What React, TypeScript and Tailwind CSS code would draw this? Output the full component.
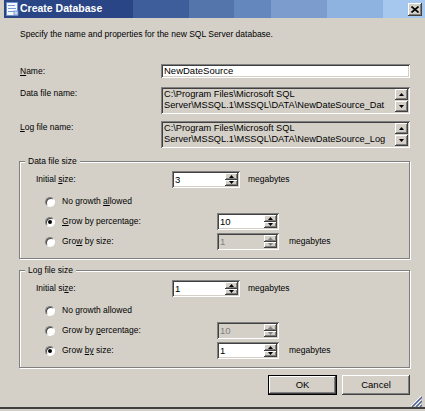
import type { ReactNode } from 'react';

const sunken =
  'shadow-[inset_1px_1px_0_#808080,inset_-1px_-1px_0_#ffffff,inset_2px_2px_0_#404040,inset_-2px_-2px_0_#d4d0c8]';
const raised =
  'shadow-[inset_-1px_-1px_0_#404040,inset_1px_1px_0_#ffffff,inset_-2px_-2px_0_#808080,inset_2px_2px_0_#d4d0c8]';

function Arrow({ dir, disabled }: { dir: 'up' | 'down'; disabled?: boolean }) {
  const fill = disabled ? '#808080' : '#000000';
  return (
    <svg width="5" height="3" viewBox="0 0 5 3">
      {dir === 'up' ? <polygon points="2.5,0 5,3 0,3" fill={fill} /> : <polygon points="0,0 5,0 2.5,3" fill={fill} />}
    </svg>
  );
}

function SpinButton({ dir, disabled }: { dir: 'up' | 'down'; disabled?: boolean }) {
  return (
    <div className={`flex flex-1 items-center justify-center bg-[#d4d0c8] ${raised}`}>
      <Arrow dir={dir} disabled={disabled} />
    </div>
  );
}

function Spin({ value, disabled, className }: { value: string; disabled?: boolean; className: string }) {
  return (
    <div className={`flex h-[17px] shrink-0 p-[2px] ${sunken} ${disabled ? 'bg-[#d4d0c8]' : 'bg-white'} ${className}`}>
      <div className={`flex-1 pl-[1px] text-[9.5px] leading-[13px] ${disabled ? 'text-[#808080]' : 'text-black'}`}>
        {value}
      </div>
      <div className="flex w-[13px] flex-col">
        <SpinButton dir="up" disabled={disabled} />
        <SpinButton dir="down" disabled={disabled} />
      </div>
    </div>
  );
}

function PathBox({ lines }: { lines: string[] }) {
  return (
    <div className={`flex h-[27px] min-w-0 flex-1 p-[2px] bg-[#d4d0c8] ${sunken}`}>
      <div className="min-w-0 flex-1 overflow-hidden whitespace-nowrap pl-[1px] text-[9.25px] leading-[11px]">
        {lines.map((l) => (
          <div key={l}>{l}</div>
        ))}
      </div>
      <div className="flex w-[13px] shrink-0 flex-col justify-between">
        <div className={`flex h-[11px] items-center justify-center bg-[#d4d0c8] ${raised}`}>
          <Arrow dir="up" />
        </div>
        <div className={`flex h-[11px] items-center justify-center bg-[#d4d0c8] ${raised}`}>
          <Arrow dir="down" />
        </div>
      </div>
    </div>
  );
}

function Radio({ checked }: { checked?: boolean }) {
  return (
    <div className="flex h-[10px] w-[10px] shrink-0 items-center justify-center rounded-full border border-t-[#808080] border-l-[#808080] border-b-white border-r-white bg-white shadow-[inset_1px_1px_0_#404040]">
      {checked && <div className="h-[4px] w-[4px] rounded-full bg-black" />}
    </div>
  );
}

function Group({ title, children }: { title: string; children: ReactNode }) {
  return (
    <div className="relative border border-[#808080] pt-[9px] pb-[8px] shadow-[1px_1px_0_#ffffff,inset_1px_1px_0_#ffffff]">
      <span className="absolute -top-[7px] left-[5px] bg-[#d4d0c8] px-[3px] leading-[12px]">{title}</span>
      {children}
    </div>
  );
}

function SizeGroup({
  title,
  initial,
  mode,
  pct,
  size,
  labels
}: {
  title: string;
  initial: string;
  mode: 'none' | 'pct' | 'size';
  pct: string;
  size: string;
  labels: [ReactNode, ReactNode, ReactNode, ReactNode];
}) {
  return (
    <Group title={title}>
      <div className="flex h-[17px] items-center pl-[16px]">
        <span className="w-[136px] shrink-0">{labels[0]}</span>
        <Spin value={initial} className="w-[68px]" />
        <span className="ml-[8px]">megabytes</span>
      </div>
      <div className="mt-[5px] flex h-[17px] items-center pl-[25px]">
        <Radio checked={mode === 'none'} />
        <span className="ml-[7px]">{labels[1]}</span>
      </div>
      <div className="mt-[3px] flex h-[17px] items-center pl-[25px]">
        <Radio checked={mode === 'pct'} />
        <span className="ml-[7px] w-[155px] shrink-0">{labels[2]}</span>
        <Spin value={pct} disabled={mode !== 'pct'} className="w-[62px]" />
      </div>
      <div className="mt-[3px] flex h-[17px] items-center pl-[25px]">
        <Radio checked={mode === 'size'} />
        <span className="ml-[7px] w-[155px] shrink-0">{labels[3]}</span>
        <Spin value={size} disabled={mode !== 'size'} className="w-[62px]" />
        <span className="ml-[10px]">megabytes</span>
      </div>
    </Group>
  );
}

function Button({ children, primary }: { children: ReactNode; primary?: boolean }) {
  return (
    <div className={primary ? 'border border-black' : ''}>
      <div
        className={`flex items-center justify-center bg-[#d4d0c8] ${raised} ${primary ? 'h-[18px] w-[67px]' : 'h-[20px] w-[68px]'}`}>
        {children}
      </div>
    </div>
  );
}

export default function App() {
  return (
    <div className="flex h-[411px] w-[425px] flex-col overflow-hidden bg-[#d4d0c8] pl-[4px] font-['Liberation_Sans',Arial,sans-serif] text-[8.5px] text-black">
      {/* title bar */}
      <div className="flex h-[18px] items-center bg-[linear-gradient(90deg,#2a4586_0,#2a4586_129px,#3e5d9b_129px,#3e5d9b_185px,#5475ac_185px,#5475ac_230px,#6488bd_230px,#6488bd_267px,#7b9ccc_267px,#7b9ccc_323px,#8eb3e0_323px,#8eb3e0_379px,#a6c8ee_379px)]">
        <svg width="13" height="14" viewBox="0 0 13 14" className="ml-[2px]">
          <rect x="0.5" y="0.5" width="11" height="13" fill="#f4f8ff" stroke="#6f8fc8" />
          <rect x="2" y="3" width="7" height="1" fill="#7a9ad6" />
          <rect x="2" y="6" width="8" height="1" fill="#7a9ad6" />
          <rect x="2" y="9" width="6" height="1" fill="#7a9ad6" />
          <rect x="8" y="9" width="4" height="4" fill="#c8d6f0" stroke="#6f8fc8" strokeWidth="0.8" />
        </svg>
        <span className="ml-[1px] text-[10.5px] font-bold text-white">Create Database</span>
        <div className={`ml-auto mr-[3px] flex h-[13px] w-[14px] items-center justify-center bg-[#d4d0c8] ${raised}`}>
          <svg width="8" height="7" viewBox="0 0 8 7">
            <path d="M0.5 0.5 L7.5 6.5 M7.5 0.5 L0.5 6.5" stroke="#000" strokeWidth="1.6" />
          </svg>
        </div>
      </div>

      <div className="flex flex-col px-[15px]">
        <div className="mt-[10px] pl-[1px] leading-[12px]">
          Specify the name and properties for the new SQL Server database.
        </div>

        <div className="mt-[24px] flex h-[14px] items-center">
          <span className="w-[142px] shrink-0 pl-[1px]">
            <u>N</u>ame:
          </span>
          <div className={`flex h-[14px] min-w-0 flex-1 items-center bg-white px-[3px] text-[9.5px] ${sunken}`}>
            NewDateSource
          </div>
        </div>

        <div className="mt-[9px] flex items-start">
          <span className="w-[142px] shrink-0 pl-[1px] leading-[12px]">Data file name:</span>
          <PathBox lines={['C:\\Program Files\\Microsoft SQL', 'Server\\MSSQL.1\\MSSQL\\DATA\\NewDateSource_Dat']} />
        </div>

        <div className="mt-[7px] flex items-start">
          <span className="w-[142px] shrink-0 pl-[1px] leading-[12px]">
            <u>L</u>og file name:
          </span>
          <PathBox lines={['C:\\Program Files\\Microsoft SQL', 'Server\\MSSQL.1\\MSSQL\\DATA\\NewDateSource_Log']} />
        </div>

        <div className="mt-[13px]">
          <SizeGroup
            title="Data file size"
            initial="3"
            mode="pct"
            pct="10"
            size="1"
            labels={[
              <>
                Initial <u>s</u>ize:
              </>,
              <>
                No growth <u>al</u>lowed
              </>,
              <>
                <u>G</u>row by percentage:
              </>,
              <>
                Gro<u>w</u> by size:
              </>
            ]}
          />
        </div>

        <div className="mt-[11px]">
          <SizeGroup
            title="Log file size"
            initial="1"
            mode="size"
            pct="10"
            size="1"
            labels={[
              <>
                Initial si<u>z</u>e:
              </>,
              <>No growth allowed</>,
              <>
                Grow by <u>p</u>ercentage:
              </>,
              <>
                Grow <u>by</u> size:
              </>
            ]}
          />
        </div>

        <div className="mt-[7px] flex justify-end gap-[5px] text-[9.5px]">
          <Button primary>OK</Button>
          <Button>Cancel</Button>
        </div>
      </div>

      <div className="flex h-[12px] justify-end pr-[3px]">
        <svg width="12" height="12" viewBox="0 0 12 12">
          <path d="M11 1 L1 11 M11 5 L5 11 M11 9 L9 11" stroke="#ffffff" strokeWidth="1" />
          <path d="M12 2 L2 12 M12 6 L6 12 M12 10 L10 12" stroke="#4a6398" strokeWidth="1.4" />
        </svg>
      </div>
      <div className="-ml-[4px] h-[2px] bg-[#404040]" />
    </div>
  );
}
